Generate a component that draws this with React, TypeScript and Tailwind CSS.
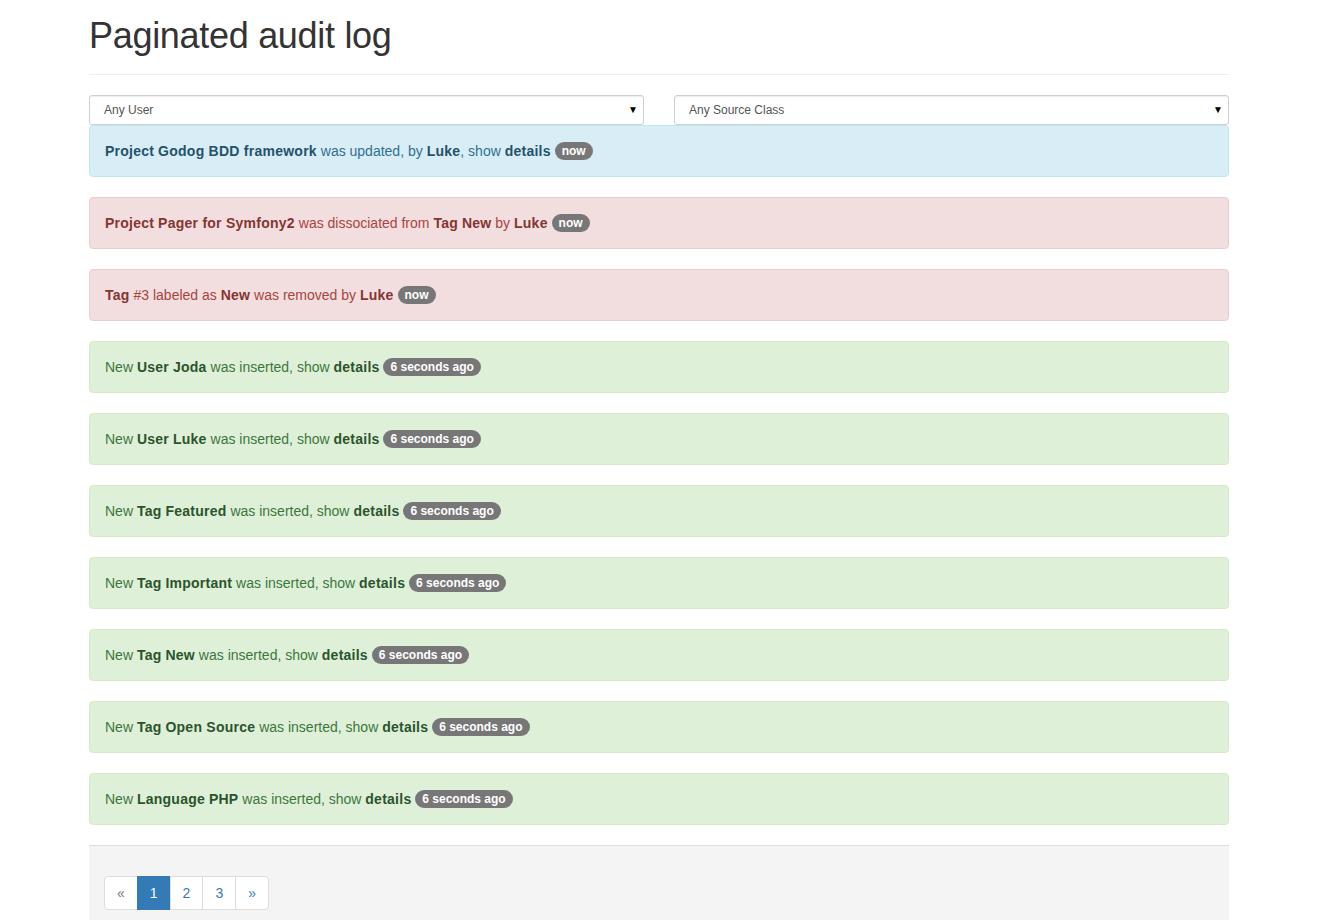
import React from "react";

type Part = { t: string; b?: boolean };
type Entry = { kind: "info" | "danger" | "success"; parts: Part[]; ago: string };

const styles = {
  info: { box: "bg-[#d9edf7] border-[#bce8f1] text-[#31708f]", strong: "text-[#245269]" },
  danger: { box: "bg-[#f2dede] border-[#ebccd1] text-[#a94442]", strong: "text-[#843534]" },
  success: { box: "bg-[#dff0d8] border-[#d6e9c6] text-[#3c763d]", strong: "text-[#2b542c]" },
};

const inserted = (kind: string, name: string): Part[] => [
  { t: "New " },
  { t: kind, b: true },
  { t: " " },
  { t: name, b: true },
  { t: " was inserted, show " },
  { t: "details", b: true },
];

const entries: Entry[] = [
  {
    kind: "info",
    parts: [
      { t: "Project", b: true },
      { t: " " },
      { t: "Godog BDD framework", b: true },
      { t: " was updated, by " },
      { t: "Luke", b: true },
      { t: ", show " },
      { t: "details", b: true },
    ],
    ago: "now",
  },
  {
    kind: "danger",
    parts: [
      { t: "Project", b: true },
      { t: " " },
      { t: "Pager for Symfony2", b: true },
      { t: " was dissociated from " },
      { t: "Tag", b: true },
      { t: " " },
      { t: "New", b: true },
      { t: " by " },
      { t: "Luke", b: true },
    ],
    ago: "now",
  },
  {
    kind: "danger",
    parts: [
      { t: "Tag", b: true },
      { t: " #3 labeled as " },
      { t: "New", b: true },
      { t: " was removed by " },
      { t: "Luke", b: true },
    ],
    ago: "now",
  },
  { kind: "success", parts: inserted("User", "Joda"), ago: "6 seconds ago" },
  { kind: "success", parts: inserted("User", "Luke"), ago: "6 seconds ago" },
  { kind: "success", parts: inserted("Tag", "Featured"), ago: "6 seconds ago" },
  { kind: "success", parts: inserted("Tag", "Important"), ago: "6 seconds ago" },
  { kind: "success", parts: inserted("Tag", "New"), ago: "6 seconds ago" },
  { kind: "success", parts: inserted("Tag", "Open Source"), ago: "6 seconds ago" },
  { kind: "success", parts: inserted("Language", "PHP"), ago: "6 seconds ago" },
];

function FakeSelect({ label }: { label: string }) {
  return (
    <div className="flex-1 h-[30px] flex items-center justify-between pl-[14px] pr-[5px] bg-white border border-[#cfcfcf] rounded-[3px] shadow-[inset_0_1px_1px_rgba(0,0,0,0.075)] text-[12px] text-[#555]">
      <span>{label}</span>
      <span className="text-[10px] text-black">▼</span>
    </div>
  );
}

export default function App() {
  return (
    <div className="min-h-screen bg-white font-['Liberation_Sans',Arial,sans-serif] text-[14px] leading-[20px] text-[#333]">
      <div className="w-[1140px] ml-[89px]">
        <div className="pt-[16px] pb-[18px] border-b border-[#eee]">
          <h1 className="text-[36px] leading-[40px] font-medium tracking-[-0.3px] text-[#333]">Paginated audit log</h1>
        </div>

        <div className="flex gap-[30px] mt-[20px]">
          <FakeSelect label="Any User" />
          <FakeSelect label="Any Source Class" />
        </div>

        <div className="flex flex-col gap-[20px]">
          {entries.map((e, i) => (
            <div key={i} className={`border rounded-[4px] p-[15px] ${styles[e.kind].box}`}>
              {e.parts.map((p, j) =>
                p.b ? (
                  <b key={j} className={`font-bold tracking-[0.25px] ${styles[e.kind].strong}`}>
                    {p.t}
                  </b>
                ) : (
                  <span key={j}>{p.t}</span>
                )
              )}{" "}
              <span className="inline-block align-[1px] bg-[#777] text-white text-[12px] font-bold leading-none px-[7px] py-[3px] rounded-[10px]">
                {e.ago}
              </span>
            </div>
          ))}
        </div>

        <div className="mt-[20px] border-t border-[#ddd] bg-[#f4f4f4] px-[15px] py-[30px]">
          <div className="inline-flex">
            <span className="px-[12px] py-[6px] border border-[#ddd] bg-white text-[#777] rounded-l-[4px]">«</span>
            <span className="px-[12px] py-[6px] border border-[#337ab7] bg-[#337ab7] text-white -ml-px">1</span>
            <span className="px-[12px] py-[6px] border border-[#ddd] bg-white text-[#337ab7] -ml-px">2</span>
            <span className="px-[12px] py-[6px] border border-[#ddd] bg-white text-[#337ab7] -ml-px">3</span>
            <span className="px-[12px] py-[6px] border border-[#ddd] bg-white text-[#337ab7] -ml-px rounded-r-[4px]">»</span>
          </div>
        </div>
      </div>
    </div>
  );
}
